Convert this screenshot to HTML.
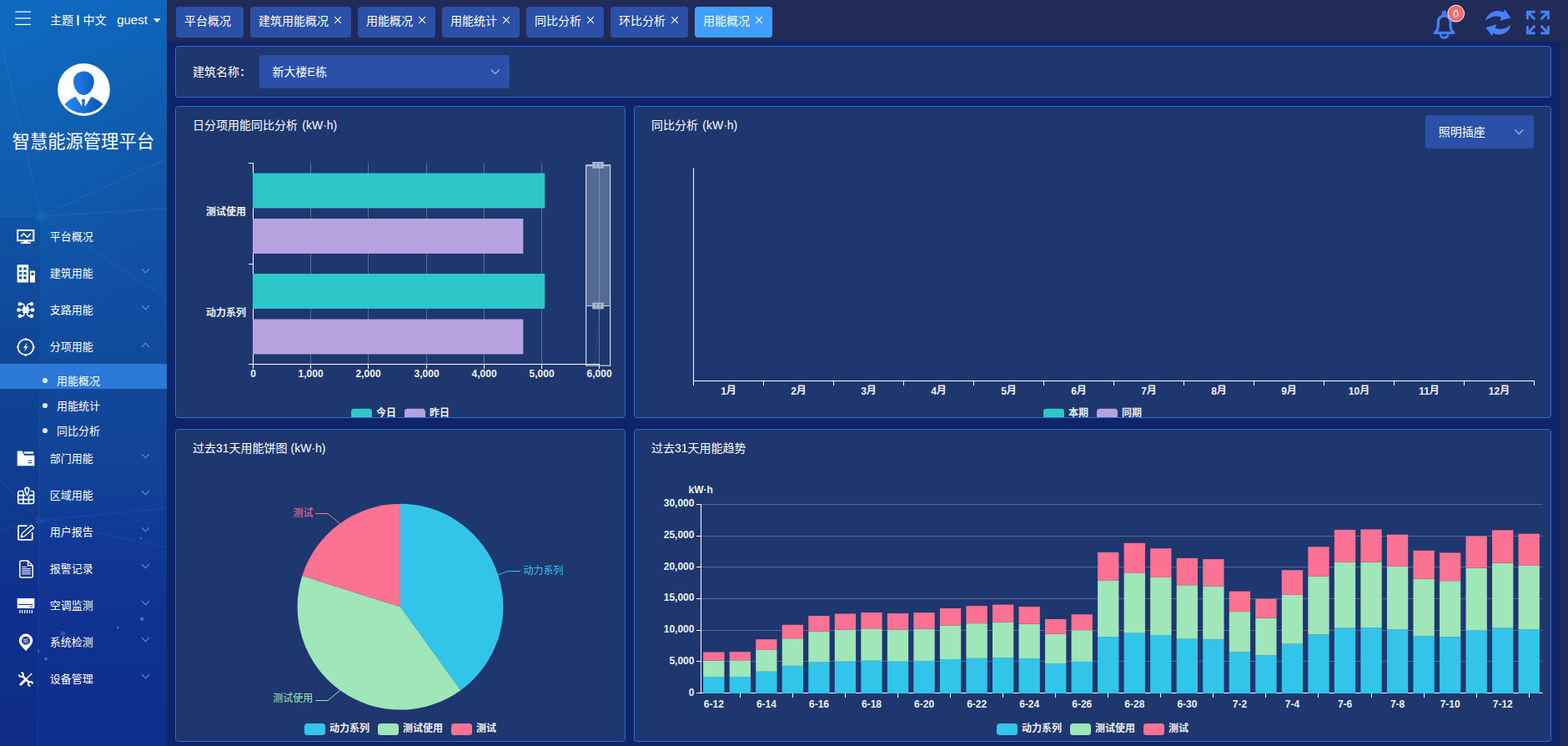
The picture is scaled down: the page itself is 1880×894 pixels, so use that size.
<!DOCTYPE html>
<html lang="zh-CN"><head><meta charset="utf-8"><title>智慧能源管理平台</title><style>
html,body{margin:0;padding:0}
body{width:1880px;height:894px;overflow:hidden;position:relative;background:#0f2569;font-family:"Liberation Sans","Noto Sans CJK SC",sans-serif;color:#fff}
.abs{position:absolute}
.t{position:absolute;white-space:nowrap;line-height:1;height:1em;color:var(--c)}
.cj{display:inline-block;position:relative;height:1em;line-height:1;vertical-align:top;white-space:nowrap;font-family:"Liberation Sans","Noto Sans CJK SC",sans-serif}
.la{display:inline-block;vertical-align:top;position:relative;top:.034em;white-space:pre}
.ttl .cj:first-child+.la:last-child{margin-left:1.400px}
#side{position:absolute;left:0;top:0;width:200px;height:894px;overflow:hidden;background:linear-gradient(180deg,#0e66bb 0%,#1057aa 22%,#114b9e 45%,#104698 56%,#114296 64%,#103a95 72%,#103492 79%,#0e2f8d 95%,#0e2e8b 100%)}
#top{position:absolute;left:200px;top:0;width:1680px;height:50px;background:#212b57}
.tab{position:absolute;top:8px;height:37px;border-radius:4px;background:#2a50a8}
.tab.on{background:#409eff}
.panel{position:absolute;box-sizing:border-box;background:#1e376f;border:1px solid #2d6bd0;border-radius:4px;overflow:hidden}
.sel{position:absolute;background:#2a50a8;border-radius:4px}
</style></head><body><div id="side"><svg class="abs" style="left:0;top:0" width="200" height="894" viewBox="0 0 200 894">
<defs>
<radialGradient id="glow" cx="0.1" cy="0.02" r="0.9"><stop offset="0" stop-color="#0d72c4" stop-opacity=".38"/><stop offset="1" stop-color="#0d72c4" stop-opacity="0"/></radialGradient>
<linearGradient id="av" gradientUnits="userSpaceOnUse" x1="82" y1="0" x2="118" y2="0"><stop offset="0" stop-color="#2286f0"/><stop offset="1" stop-color="#0d57bb"/></linearGradient>
<clipPath id="avc"><circle cx="100.2" cy="107.4" r="28.3"/></clipPath>
</defs>
<rect width="200" height="500" fill="url(#glow)"/>
<path d="M0 259L49 259L45 894H0Z" fill="#06205f" fill-opacity=".10"/>
<g stroke="#3f8ee0" stroke-opacity=".22" stroke-width="1.400" fill="none">
<path d="M49 259L-1 40"/><path d="M49 259L200 190"/><path d="M49 259L200 250"/><path d="M49 259L0 259"/><path d="M49 259L200 357"/><path d="M49 259L45 894" stroke-opacity=".13"/>
</g>
<g stroke="#3f78e0" stroke-opacity=".16" stroke-width="1.400" fill="none">
<path d="M46.800 623.700L0 575"/><path d="M46.800 623.700L200 609"/><path d="M46.800 623.700L200 656"/><path d="M46.800 623.700L0 636"/>
</g>
<circle cx="49" cy="259.500" r="6.500" fill="#1a66bb" fill-opacity=".75"/>
<circle cx="46.800" cy="623.700" r="5.500" fill="#2a5fc8" fill-opacity=".22"/>
<g fill="#6f9ae6" fill-opacity=".55"><circle cx="170.300" cy="741.800" r="2.300"/><circle cx="141.300" cy="752" r="1.600"/><circle cx="75.400" cy="759.300" r="3" fill-opacity=".3"/><circle cx="55" cy="789.500" r="1.800"/><circle cx="46" cy="780.500" r="1.200"/><circle cx="169" cy="645" r="1.200"/></g>
<g stroke="#fff" stroke-width="1.3"><path d="M18.3 14.2H37M18.3 21.8H37M18.3 29.4H37"/></g><rect x="92.5" y="18.2" width="2" height="12.3" fill="#fff"/><path d="M183.8 22.3h8.8l-4.4 4.8z" fill="#fff"/><circle cx="100.500" cy="107.500" r="31.400" fill="#fff"/><g fill="url(#av)">
<path d="M100.400 85.500C107.500 85.500 112.800 90.500 112.800 97.500C112.800 105.500 107 114 100.400 114C93.800 114 87.900 105.500 87.900 97.500C87.900 90.500 93.300 85.500 100.400 85.500Z"/>
<path d="M90.600 115.700L98 126.900H102.600L109.500 115.900Q118.500 119.500 123.300 124.900A29.200 29.200 0 0 1 77.600 124.900Q82 119.500 90.600 115.700Z"/>
<circle cx="99.900" cy="120.700" r="2.100"/><rect x="98.400" y="121.500" width="3.100" height="6"/>
</g><rect x="0" y="436" width="200" height="30" fill="#2b79d8"/><circle cx="54" cy="456" r="3.1" fill="#e2e4ea"/><circle cx="54" cy="486" r="3.1" fill="#e2e4ea"/><circle cx="54" cy="516" r="3.1" fill="#e2e4ea"/><g stroke="#93a8d8" stroke-width="1.1" fill="none" stroke-opacity=".78"><path d="M170 322.2l4.5 4.6l4.5-4.6"/><path d="M170 366.2l4.5 4.6l4.5-4.6"/><path d="M170 544.2l4.5 4.6l4.5-4.6"/><path d="M170 588.2l4.5 4.6l4.5-4.6"/><path d="M170 632.2l4.5 4.6l4.5-4.6"/><path d="M170 676.2l4.5 4.6l4.5-4.6"/><path d="M170 720.2l4.5 4.6l4.5-4.6"/><path d="M170 764.2l4.5 4.6l4.5-4.6"/><path d="M170 808.2l4.5 4.6l4.5-4.6"/><path d="M170 415.8l4.5-4.6l4.5 4.6"/></g><g fill="#fff"><path d="M20.1 275h21.2v14.2H20.1zM22.1 277v10.2h17.2V277z" fill-rule="evenodd"/><rect x="28.4" y="289" width="5.2" height="1.6"/><rect x="24.8" y="290.3" width="12.2" height="1.7"/><path d="M24.9 283.6l3.5-3.7l4.4 4.3l4-4.2" stroke="#fff" stroke-width="1.5" fill="none"/><path d="M20.6 317.2h13.6v21.4H20.6zM23 320.5h3.1v3.1h-3.1zM23 325.9h3.1v3.1h-3.1zM23 331.3h3.1v3.1h-3.1zM28.4 320.5h3.1v3.1h-3.1zM28.4 325.9h3.1v3.1h-3.1zM28.4 331.3h3.1v3.1h-3.1zM36 324.5h6v14.1h-6zM37.4 326.8h3.1v3.1h-3.1z" fill-rule="evenodd"/><rect x="27.200" y="367.800" width="7.300" height="7.300" rx=".8"/><circle cx="23.9" cy="364.2" r="2.3"/><circle cx="37.8" cy="364.2" r="2.3"/><circle cx="22.5" cy="371.4" r="2.3"/><circle cx="39.1" cy="371.4" r="2.3"/><circle cx="23.9" cy="378.7" r="2.3"/><circle cx="37.8" cy="378.7" r="2.3"/><path d="M23.9 364.2h3.6l1.6 1.8v2.5M37.8 364.2h-3.6l-1.6 1.8v2.5M22.5 371.4h17M23.9 378.7h3.6l1.6-1.8v-2.5M37.8 378.7h-3.6l-1.6-1.8v-2.5" stroke="#fff" stroke-width="1.500" fill="none"/><circle cx="30.8" cy="416" r="9.3" stroke="#fff" stroke-width="1.8" fill="none"/><path d="M30.8 405.2v2M30.8 424.8v2M20 416h2M39.6 416h2" stroke="#fff" stroke-width="2.2"/><path d="M32.6 410.6l-4.6 6.3h2.6l-1.6 4.6l4.8-6.4h-2.6z"/><path d="M20.7 540.6h6l2.6 5.1h12v12.5H20.7zM33.6 551.4h5v1.1h-5zM33.6 554h5v1.1h-5z" fill-rule="evenodd"/><path d="M28.4 541.2h11.8v2.6h-10.5z"/><g stroke="#fff" stroke-width="1.6" fill="none"><rect x="21.7" y="588.5" width="18.8" height="15" rx="2.2"/><path d="M27.9 588.5v15M34.4 588.5v15M21.7 593.6h18.8M21.7 598.6h18.8"/></g><path d="M32.400 593.300c-1.200-2.200-2.400-4.300-2.400-6.700a2.400 2.400 0 0 1 4.800 0c0 2.400-1.200 4.500-2.400 6.700z" fill="#1046a0" stroke="#1046a0" stroke-width="4.400"/><path d="M32.400 593.300c-1.200-2.200-2.400-4.300-2.400-6.700a2.400 2.400 0 0 1 4.800 0c0 2.400-1.200 4.500-2.400 6.700z" fill="#1046a0" stroke="#fff" stroke-width="1.600" stroke-linejoin="round"/><g stroke="#fff" stroke-width="1.7" fill="none"><path d="M32.5 630.2H22.9a.9.9 0 0 0-.9.9v14.9a.9.9 0 0 0 .9.9h14.9a.9.9 0 0 0 .9-.9V638"/><path d="M25 643.9l1.4-4.6l11.3-10l3 3.3l-11.2 10z" stroke-width="1.3" stroke-linejoin="round"/></g><path d="M25 643.9l.9-3l2.2 2.4z"/><g stroke="#fff" fill="none"><path d="M33.5 672H25.2a1.4 1.4 0 0 0-1.4 1.4v17.3a1.4 1.4 0 0 0 1.4 1.4h12.6a1.4 1.4 0 0 0 1.4-1.4V678zv5.8h5.7" stroke-width="1.5" stroke-linejoin="round"/><path d="M26.2 679.4h6M26.2 681.6h10.6M26.2 683.7h10.6M26.2 685.8h10.6M26.2 687.9h10.6" stroke-width="1"/></g><path d="M20.7 717h20.6v12.1H20.7zM22 723.9h17.4v1H22zM35.6 726.4h3.6v1h-3.6z" fill-rule="evenodd"/><rect x="23.2" y="730.9" width="1.3" height="4"/><rect x="26.1" y="730.9" width="1.3" height="4"/><rect x="29" y="730.9" width="1.3" height="4"/><rect x="31.9" y="730.9" width="1.3" height="4"/><rect x="34.8" y="730.9" width="1.3" height="4"/><rect x="37.7" y="730.9" width="1.3" height="4"/><path d="M31 780.2c-2.600-3.600-8.200-7.400-8.200-12.400a8.200 8.200 0 0 1 16.400 0c0 5-5.600 8.800-8.200 12.400zM31 762.800a5 5 0 1 0 0 10a5 5 0 0 0 0-10z" fill-rule="evenodd"/><path d="M27.600 766.300h4.800c1.300 0 1.300-1.700 0-1.700M27.600 768h6.500M28.500 769.700h3.300c1.500 0 1.500 1.900 0 1.900" stroke="#fff" stroke-width=".8" fill="none"/><g stroke="#fff" fill="none"><path d="M27 810.100l7.800 7.800" stroke-width="2.600"/><path d="M25.43 805.90A2.5 2.5 0 1 1 22.80 808.53M36.370 822.10A2.5 2.5 0 1 1 39.00 819.47" stroke-width="2"/><path d="M37.900 807.200l-7.200 7.200" stroke-width="1.400" stroke-linecap="round"/><path d="M30.300 814.800l-5.400 5.400" stroke-width="3.100" stroke-linecap="round"/></g></g></svg><div class="t" style="top:17.20px;font-size:14px;--c:#fff;left:59.90px;"><span class="cj" style="width:2em">主题</span></div><div class="t" style="top:17.20px;font-size:14px;--c:#fff;left:99.50px;"><span class="cj" style="width:2em">中文</span></div><div class="t" style="top:15.30px;font-size:15px;--c:#fff;left:140.20px;"><span class="la">guest</span></div><div class="t" style="top:159.65px;font-size:21.3px;--c:#fff;left:99.80px;transform:translateX(-50%);"><span class="cj" style="width:8em">智慧能源管理平台</span></div><div class="t" style="top:277.30px;font-size:13px;--c:#fff;left:59.80px;"><span class="cj" style="width:4em">平台概况</span></div><div class="t" style="top:321.30px;font-size:13px;--c:#fff;left:59.80px;"><span class="cj" style="width:4em">建筑用能</span></div><div class="t" style="top:365.30px;font-size:13px;--c:#fff;left:59.80px;"><span class="cj" style="width:4em">支路用能</span></div><div class="t" style="top:409.30px;font-size:13px;--c:#fff;left:59.80px;"><span class="cj" style="width:4em">分项用能</span></div><div class="t" style="top:543.30px;font-size:13px;--c:#fff;left:59.80px;"><span class="cj" style="width:4em">部门用能</span></div><div class="t" style="top:587.30px;font-size:13px;--c:#fff;left:59.80px;"><span class="cj" style="width:4em">区域用能</span></div><div class="t" style="top:631.30px;font-size:13px;--c:#fff;left:59.80px;"><span class="cj" style="width:4em">用户报告</span></div><div class="t" style="top:675.30px;font-size:13px;--c:#fff;left:59.80px;"><span class="cj" style="width:4em">报警记录</span></div><div class="t" style="top:719.30px;font-size:13px;--c:#fff;left:59.80px;"><span class="cj" style="width:4em">空调监测</span></div><div class="t" style="top:763.30px;font-size:13px;--c:#fff;left:59.80px;"><span class="cj" style="width:4em">系统检测</span></div><div class="t" style="top:807.30px;font-size:13px;--c:#fff;left:59.80px;"><span class="cj" style="width:4em">设备管理</span></div><div class="t" style="top:449.50px;font-size:13px;--c:#fff;left:68.00px;"><span class="cj" style="width:4em">用能概况</span></div><div class="t" style="top:479.50px;font-size:13px;--c:#fff;left:68.00px;"><span class="cj" style="width:4em">用能统计</span></div><div class="t" style="top:509.50px;font-size:13px;--c:#fff;left:68.00px;"><span class="cj" style="width:4em">同比分析</span></div></div><div id="top"></div><div class="tab" style="left:211px;width:81px"></div><div class="t" style="top:18.40px;font-size:14px;--c:#fff;left:221.00px;"><span class="cj" style="width:4em">平台概况</span></div><div class="tab" style="left:300px;width:121px"></div><div class="t" style="top:18.40px;font-size:14px;--c:#fff;left:310.00px;"><span class="cj" style="width:6em">建筑用能概况</span></div><svg class="abs" style="left:399.8px;top:19.1px" width="10" height="10" viewBox="0 0 10 10"><path d="M1.200 1.200l7.600 7.600M8.800 1.200l-7.600 7.600" stroke="#fff" stroke-width="1.100" fill="none"/></svg><div class="tab" style="left:429px;width:93px"></div><div class="t" style="top:18.40px;font-size:14px;--c:#fff;left:439.00px;"><span class="cj" style="width:4em">用能概况</span></div><svg class="abs" style="left:500.8px;top:19.1px" width="10" height="10" viewBox="0 0 10 10"><path d="M1.200 1.200l7.600 7.600M8.800 1.200l-7.600 7.600" stroke="#fff" stroke-width="1.100" fill="none"/></svg><div class="tab" style="left:530px;width:93px"></div><div class="t" style="top:18.40px;font-size:14px;--c:#fff;left:540.00px;"><span class="cj" style="width:4em">用能统计</span></div><svg class="abs" style="left:601.8px;top:19.1px" width="10" height="10" viewBox="0 0 10 10"><path d="M1.200 1.200l7.600 7.600M8.800 1.200l-7.600 7.600" stroke="#fff" stroke-width="1.100" fill="none"/></svg><div class="tab" style="left:631px;width:93px"></div><div class="t" style="top:18.40px;font-size:14px;--c:#fff;left:641.00px;"><span class="cj" style="width:4em">同比分析</span></div><svg class="abs" style="left:702.8px;top:19.1px" width="10" height="10" viewBox="0 0 10 10"><path d="M1.200 1.200l7.600 7.600M8.800 1.200l-7.600 7.600" stroke="#fff" stroke-width="1.100" fill="none"/></svg><div class="tab" style="left:732px;width:93px"></div><div class="t" style="top:18.40px;font-size:14px;--c:#fff;left:742.00px;"><span class="cj" style="width:4em">环比分析</span></div><svg class="abs" style="left:803.8px;top:19.1px" width="10" height="10" viewBox="0 0 10 10"><path d="M1.200 1.200l7.600 7.600M8.800 1.200l-7.600 7.600" stroke="#fff" stroke-width="1.100" fill="none"/></svg><div class="tab on" style="left:833px;width:93px"></div><div class="t" style="top:18.40px;font-size:14px;--c:#fff;left:843.00px;"><span class="cj" style="width:4em">用能概况</span></div><svg class="abs" style="left:904.8px;top:19.1px" width="10" height="10" viewBox="0 0 10 10"><path d="M1.200 1.200l7.600 7.600M8.800 1.200l-7.600 7.600" stroke="#fff" stroke-width="1.100" fill="none"/></svg><svg class="abs" style="left:1700px;top:0" width="180" height="50" viewBox="1700 0 180 50">
<g fill="none" stroke="#4481fb" stroke-width="3.300" stroke-linejoin="round" stroke-linecap="round">
<path d="M1720.200 39.300h22.800c-3.500-2.600-4-6-4-10v-3.300a7.300 7.300 0 0 0-14.600 0v3.300c0 4-.5 7.400-4.200 10z"/>
<circle cx="1731.600" cy="15.600" r="1.600" stroke-width="2.400"/>
<path d="M1727.200 42.200a4.700 4.700 0 0 0 8.800 0" stroke-width="2.800"/>
</g>
<circle cx="1745.700" cy="16.200" r="9.900" fill="#f56c6c" stroke="#fff" stroke-width="1"/>
<g fill="#4481fb">
<path id="rf" d="M1781.200 24.800C1782.500 16 1793 9.800 1802.600 14.500L1804 11.200L1811.400 21.200L1798.300 25L1800 20.800C1794 18 1786.500 19.800 1781.200 24.800Z"/>
<use href="#rf" transform="rotate(180 1796.400 27.100)"/>
</g>
<g stroke="#4481fb" stroke-width="2.900" fill="none">
<path d="M1831.400 23.200v-8.900h9.200M1832 14.900l8.300 8.300" />
<path d="M1856.400 23.200v-8.900h-9.200M1855.800 14.900l-8.300 8.300"/>
<path d="M1831.400 30.900v8.900h9.200M1832 39.200l8.300-8.300"/>
<path d="M1856.400 30.900v8.900h-9.200M1855.800 39.200l-8.300-8.300"/>
</g>
</svg><div class="t" style="top:10.50px;font-size:12px;--c:#fff;left:1745.70px;transform:translateX(-50%);"><span class="la">0</span></div><div class="abs" style="left:1870px;top:50px;width:10px;height:844px;background:#212b57;border-radius:5px 5px 0 0"></div><div class="panel" style="left:210px;top:55px;width:1650px;height:62px"><div class="abs" style="left:-211px;top:-56px;width:1880px;height:894px"><div class="sel" style="left:310.500px;top:66px;width:300px;height:39.500px"></div><svg class="abs" style="left:0;top:0" width="1880" height="894" viewBox="0 0 1880 894"><path d="M588.8 83.4l5 5l5-5" stroke="#b8bfd2" stroke-width="1.200" fill="none"/></svg><div class="t" style="top:79.00px;font-size:14px;--c:#fff;left:231.00px;"><span class="cj" style="width:4em">建筑名称</span><span class="la" style="font-weight:bold;margin-left:1.200px">:</span></div><div class="t" style="top:79.00px;font-size:14px;--c:#fff;left:326.60px;"><span class="cj" style="width:3em">新大楼</span><span class="la">E</span><span class="cj" style="width:1em">栋</span></div></div></div><div class="panel" style="left:210px;top:127px;width:540px;height:374px"><div class="abs" style="left:-211px;top:-128px;width:1880px;height:894px"><svg class="abs" style="left:0;top:0" width="1880" height="894" viewBox="0 0 1880 894"><g stroke="#fff" stroke-opacity=".28" stroke-width="1"><path d="M372.5 195.5V436.5"/><path d="M441.5 195.5V436.5"/><path d="M511.5 195.5V436.5"/><path d="M580.5 195.5V436.5"/><path d="M649.5 195.5V436.5"/><path d="M718.5 195.5V436.5"/></g><g stroke="#fff" stroke-width="1" fill="none"><path d="M303.5 195V437"/><path d="M298 195.5H303.5"/><path d="M298 316.5H303.5"/><path d="M298 436.5H303.5"/><path d="M303 436.5H719"/><path d="M303.5 436.5V442"/><path d="M372.5 436.5V442"/><path d="M441.5 436.5V442"/><path d="M511.5 436.5V442"/><path d="M580.5 436.5V442"/><path d="M649.5 436.5V442"/><path d="M718.5 436.5V442"/></g><rect x="303" y="207.55" width="350.2" height="41.9" fill="#2ec7c9"/><rect x="303" y="262.02" width="324.3" height="41.9" fill="#b6a2de"/><rect x="303" y="328.05" width="350.2" height="41.9" fill="#2ec7c9"/><rect x="303" y="382.52" width="324.3" height="41.9" fill="#b6a2de"/><rect x="702.600" y="197.600" width="29" height="169" fill="#a7b7cc" fill-opacity=".4"/><path d="M713 438L719 366.500" stroke="#fff" stroke-opacity=".06" stroke-width="1.500"/><rect x="702.600" y="197.600" width="29" height="240.500" fill="none" stroke="#d3d7df" stroke-width="1.200"/><path d="M702.600 366.500h29" stroke="#c9d0dc" stroke-width="1"/><path d="M702 198.100h30" stroke="#aab9d0" stroke-width="2.100"/><rect x="710.200" y="194" width="13.700" height="7.800" fill="#a7b7cc"/><circle cx="714.7" cy="196.6" r=".700" fill="#1e376f"/><circle cx="714.7" cy="199.5" r=".650" fill="#61769e"/><circle cx="719.5" cy="196.6" r=".700" fill="#1e376f"/><circle cx="719.5" cy="199.5" r=".650" fill="#61769e"/><rect x="710.200" y="362.6" width="13.700" height="7.800" fill="#a7b7cc"/><circle cx="714.7" cy="365.2" r=".700" fill="#1e376f"/><circle cx="714.7" cy="368.1" r=".650" fill="#61769e"/><circle cx="719.5" cy="365.2" r=".700" fill="#1e376f"/><circle cx="719.5" cy="368.1" r=".650" fill="#61769e"/><rect x="421" y="489.8" width="25" height="14" rx="3.500" fill="#2ec7c9"/><rect x="485" y="489.8" width="25" height="14" rx="3.500" fill="#b6a2de"/></svg><div class="t ttl" style="top:143.00px;font-size:14px;--c:#fff;left:231.00px;"><span class="cj" style="width:9em">日分项用能同比分析</span><span class="la"> (kW·h)</span></div><div class="t" style="top:248.20px;font-size:12px;--c:#eef0f6;right:1585.00px;font-weight:bold;"><span class="cj" style="width:4em">测试使用</span></div><div class="t" style="top:368.60px;font-size:12px;--c:#eef0f6;right:1585.00px;font-weight:bold;"><span class="cj" style="width:4em">动力系列</span></div><div class="t" style="top:441.60px;font-size:12px;--c:#eef0f6;left:303.60px;transform:translateX(-50%);font-weight:bold;"><span class="la">0</span></div><div class="t" style="top:441.60px;font-size:12px;--c:#eef0f6;left:372.60px;transform:translateX(-50%);font-weight:bold;"><span class="la">1,000</span></div><div class="t" style="top:441.60px;font-size:12px;--c:#eef0f6;left:441.60px;transform:translateX(-50%);font-weight:bold;"><span class="la">2,000</span></div><div class="t" style="top:441.60px;font-size:12px;--c:#eef0f6;left:511.60px;transform:translateX(-50%);font-weight:bold;"><span class="la">3,000</span></div><div class="t" style="top:441.60px;font-size:12px;--c:#eef0f6;left:580.60px;transform:translateX(-50%);font-weight:bold;"><span class="la">4,000</span></div><div class="t" style="top:441.60px;font-size:12px;--c:#eef0f6;left:649.60px;transform:translateX(-50%);font-weight:bold;"><span class="la">5,000</span></div><div class="t" style="top:441.60px;font-size:12px;--c:#eef0f6;left:718.60px;transform:translateX(-50%);font-weight:bold;"><span class="la">6,000</span></div><div class="t" style="top:489.40px;font-size:12px;--c:#eef0f6;left:451.00px;font-weight:bold;"><span class="cj" style="width:2em">今日</span></div><div class="t" style="top:489.40px;font-size:12px;--c:#eef0f6;left:515.00px;font-weight:bold;"><span class="cj" style="width:2em">昨日</span></div></div></div><div class="panel" style="left:760px;top:127px;width:1100px;height:374px"><div class="abs" style="left:-761px;top:-128px;width:1880px;height:894px"><div class="sel" style="left:1708.500px;top:137.500px;width:130px;height:40px"></div><svg class="abs" style="left:0;top:0" width="1880" height="894" viewBox="0 0 1880 894"><g stroke="#fff" stroke-width="1" fill="none"><path d="M831.5 201V457"/><path d="M831 456.5H1840"/><path d="M831.5 456.5V462"/><path d="M915.5 456.5V462"/><path d="M999.5 456.5V462"/><path d="M1083.5 456.5V462"/><path d="M1167.5 456.5V462"/><path d="M1251.5 456.5V462"/><path d="M1335.5 456.5V462"/><path d="M1419.5 456.5V462"/><path d="M1503.5 456.5V462"/><path d="M1587.5 456.5V462"/><path d="M1671.5 456.5V462"/><path d="M1755.5 456.5V462"/><path d="M1839.5 456.5V462"/></g><rect x="1251" y="489.8" width="25" height="14" rx="3.500" fill="#2ec7c9"/><rect x="1315" y="489.8" width="25" height="14" rx="3.500" fill="#b6a2de"/><path d="M1816.3 155.4l5 5l5-5" stroke="#b8bfd2" stroke-width="1.200" fill="none"/></svg><div class="t ttl" style="top:143.00px;font-size:14px;--c:#fff;left:781.00px;"><span class="cj" style="width:4em">同比分析</span><span class="la"> (kW·h)</span></div><div class="t" style="top:151.00px;font-size:14px;--c:#fff;left:1724.80px;"><span class="cj" style="width:4em">照明插座</span></div><div class="t" style="top:462.40px;font-size:12px;--c:#eef0f6;left:873.50px;transform:translateX(-50%);font-weight:bold;"><span class="la">1</span><span class="cj" style="width:1em">月</span></div><div class="t" style="top:462.40px;font-size:12px;--c:#eef0f6;left:957.50px;transform:translateX(-50%);font-weight:bold;"><span class="la">2</span><span class="cj" style="width:1em">月</span></div><div class="t" style="top:462.40px;font-size:12px;--c:#eef0f6;left:1041.50px;transform:translateX(-50%);font-weight:bold;"><span class="la">3</span><span class="cj" style="width:1em">月</span></div><div class="t" style="top:462.40px;font-size:12px;--c:#eef0f6;left:1125.50px;transform:translateX(-50%);font-weight:bold;"><span class="la">4</span><span class="cj" style="width:1em">月</span></div><div class="t" style="top:462.40px;font-size:12px;--c:#eef0f6;left:1209.50px;transform:translateX(-50%);font-weight:bold;"><span class="la">5</span><span class="cj" style="width:1em">月</span></div><div class="t" style="top:462.40px;font-size:12px;--c:#eef0f6;left:1293.50px;transform:translateX(-50%);font-weight:bold;"><span class="la">6</span><span class="cj" style="width:1em">月</span></div><div class="t" style="top:462.40px;font-size:12px;--c:#eef0f6;left:1377.50px;transform:translateX(-50%);font-weight:bold;"><span class="la">7</span><span class="cj" style="width:1em">月</span></div><div class="t" style="top:462.40px;font-size:12px;--c:#eef0f6;left:1461.50px;transform:translateX(-50%);font-weight:bold;"><span class="la">8</span><span class="cj" style="width:1em">月</span></div><div class="t" style="top:462.40px;font-size:12px;--c:#eef0f6;left:1545.50px;transform:translateX(-50%);font-weight:bold;"><span class="la">9</span><span class="cj" style="width:1em">月</span></div><div class="t" style="top:462.40px;font-size:12px;--c:#eef0f6;left:1629.50px;transform:translateX(-50%);font-weight:bold;"><span class="la">10</span><span class="cj" style="width:1em">月</span></div><div class="t" style="top:462.40px;font-size:12px;--c:#eef0f6;left:1713.50px;transform:translateX(-50%);font-weight:bold;"><span class="la">11</span><span class="cj" style="width:1em">月</span></div><div class="t" style="top:462.40px;font-size:12px;--c:#eef0f6;left:1797.50px;transform:translateX(-50%);font-weight:bold;"><span class="la">12</span><span class="cj" style="width:1em">月</span></div><div class="t" style="top:489.40px;font-size:12px;--c:#eef0f6;left:1281.00px;font-weight:bold;"><span class="cj" style="width:2em">本期</span></div><div class="t" style="top:489.40px;font-size:12px;--c:#eef0f6;left:1345.00px;font-weight:bold;"><span class="cj" style="width:2em">同期</span></div></div></div><div class="panel" style="left:210px;top:514px;width:540px;height:375px"><div class="abs" style="left:-211px;top:-515px;width:1880px;height:894px"><svg class="abs" style="left:0;top:0" width="1880" height="894" viewBox="0 0 1880 894"><path d="M480 727.2L480.00 603.80A123.4 123.4 0 0 1 552.36 827.16Z" fill="#32c5e9"/><path d="M480 727.2L552.36 827.16A123.4 123.4 0 0 1 362.31 690.09Z" fill="#9fe6b8"/><path d="M480 727.2L362.31 690.09A123.4 123.4 0 0 1 480.00 603.80Z" fill="#fb7293"/><g fill="none" stroke-width="1"><path d="M597.200 689.100L608.800 684.500H624" stroke="#32c5e9"/><path d="M407.500 827.500L393.100 839.500H378.300" stroke="#9fe6b8"/><path d="M407.600 627.500L393 615.500H378.400" stroke="#fb7293"/></g><rect x="365" y="867" width="25" height="14" rx="3.500" fill="#32c5e9"/><rect x="453" y="867" width="25" height="14" rx="3.500" fill="#9fe6b8"/><rect x="541" y="867" width="25" height="14" rx="3.500" fill="#fb7293"/></svg><div class="t ttl" style="top:530.00px;font-size:14px;--c:#fff;left:231.00px;"><span class="cj" style="width:2em">过去</span><span class="la">31</span><span class="cj" style="width:5em">天用能饼图</span><span class="la"> (kW·h)</span></div><div class="t" style="top:677.80px;font-size:12px;--c:#32c5e9;left:627.50px;"><span class="cj" style="width:4em">动力系列</span></div><div class="t" style="top:831.40px;font-size:12px;--c:#9fe6b8;right:1504.70px;"><span class="cj" style="width:4em">测试使用</span></div><div class="t" style="top:608.80px;font-size:12px;--c:#fb7293;right:1504.50px;"><span class="cj" style="width:2em">测试</span></div><div class="t" style="top:866.60px;font-size:12px;--c:#eef0f6;left:395.00px;font-weight:bold;"><span class="cj" style="width:4em">动力系列</span></div><div class="t" style="top:866.60px;font-size:12px;--c:#eef0f6;left:483.00px;font-weight:bold;"><span class="cj" style="width:4em">测试使用</span></div><div class="t" style="top:866.60px;font-size:12px;--c:#eef0f6;left:571.00px;font-weight:bold;"><span class="cj" style="width:2em">测试</span></div></div></div><div class="panel" style="left:760px;top:514px;width:1100px;height:375px"><div class="abs" style="left:-761px;top:-515px;width:1880px;height:894px"><svg class="abs" style="left:0;top:0" width="1880" height="894" viewBox="0 0 1880 894"><g stroke="#fff" stroke-opacity=".25" stroke-width="1"><path d="M840.5 792.5H1849.5"/><path d="M840.5 755.5H1849.5"/><path d="M840.5 717.5H1849.5"/><path d="M840.5 679.5H1849.5"/><path d="M840.5 642.5H1849.5"/><path d="M840.5 604.5H1849.5"/></g><g stroke="#fff" stroke-width="1" fill="none"><path d="M840.5 604V831"/><path d="M840 830.5H1849.5"/><path d="M835 830.5H840.5"/><path d="M835 792.5H840.5"/><path d="M835 755.5H840.5"/><path d="M835 717.5H840.5"/><path d="M835 679.5H840.5"/><path d="M835 642.5H840.5"/><path d="M835 604.5H840.5"/><path d="M887.5 830.5V836"/><path d="M950.5 830.5V836"/><path d="M1013.5 830.5V836"/><path d="M1076.5 830.5V836"/><path d="M1139.5 830.5V836"/><path d="M1202.5 830.5V836"/><path d="M1265.5 830.5V836"/><path d="M1328.5 830.5V836"/><path d="M1391.5 830.5V836"/><path d="M1454.5 830.5V836"/><path d="M1517.5 830.5V836"/><path d="M1580.5 830.5V836"/><path d="M1644.5 830.5V836"/><path d="M1707.5 830.5V836"/><path d="M1770.5 830.5V836"/><path d="M1833.5 830.5V836"/></g><rect x="843.15" y="810.98" width="25.3" height="20.02" fill="#32c5e9"/><rect x="843.15" y="791.65" width="25.3" height="19.33" fill="#9fe6b8"/><rect x="843.15" y="781.53" width="25.3" height="10.12" fill="#fb7293"/><rect x="874.68" y="810.98" width="25.3" height="20.02" fill="#32c5e9"/><rect x="874.68" y="791.35" width="25.3" height="19.63" fill="#9fe6b8"/><rect x="874.68" y="781.23" width="25.3" height="10.12" fill="#fb7293"/><rect x="906.21" y="804.79" width="25.3" height="26.21" fill="#32c5e9"/><rect x="906.21" y="778.97" width="25.3" height="25.82" fill="#9fe6b8"/><rect x="906.21" y="766.13" width="25.3" height="12.84" fill="#fb7293"/><rect x="937.74" y="797.84" width="25.3" height="33.16" fill="#32c5e9"/><rect x="937.74" y="765.23" width="25.3" height="32.61" fill="#9fe6b8"/><rect x="937.74" y="748.77" width="25.3" height="16.46" fill="#fb7293"/><rect x="969.27" y="793.61" width="25.3" height="37.39" fill="#32c5e9"/><rect x="969.27" y="756.77" width="25.3" height="36.84" fill="#9fe6b8"/><rect x="969.27" y="738.05" width="25.3" height="18.72" fill="#fb7293"/><rect x="1000.80" y="792.56" width="25.3" height="38.44" fill="#32c5e9"/><rect x="1000.80" y="754.66" width="25.3" height="37.90" fill="#9fe6b8"/><rect x="1000.80" y="735.48" width="25.3" height="19.18" fill="#fb7293"/><rect x="1032.33" y="791.80" width="25.3" height="39.20" fill="#32c5e9"/><rect x="1032.33" y="753.30" width="25.3" height="38.50" fill="#9fe6b8"/><rect x="1032.33" y="733.97" width="25.3" height="19.33" fill="#fb7293"/><rect x="1063.86" y="792.56" width="25.3" height="38.44" fill="#32c5e9"/><rect x="1063.86" y="754.51" width="25.3" height="38.05" fill="#9fe6b8"/><rect x="1063.86" y="735.03" width="25.3" height="19.48" fill="#fb7293"/><rect x="1095.39" y="791.95" width="25.3" height="39.05" fill="#32c5e9"/><rect x="1095.39" y="753.60" width="25.3" height="38.35" fill="#9fe6b8"/><rect x="1095.39" y="734.12" width="25.3" height="19.48" fill="#fb7293"/><rect x="1126.92" y="789.99" width="25.3" height="41.01" fill="#32c5e9"/><rect x="1126.92" y="749.52" width="25.3" height="40.47" fill="#9fe6b8"/><rect x="1126.92" y="728.99" width="25.3" height="20.53" fill="#fb7293"/><rect x="1158.45" y="788.78" width="25.3" height="42.22" fill="#32c5e9"/><rect x="1158.45" y="747.11" width="25.3" height="41.67" fill="#9fe6b8"/><rect x="1158.45" y="726.12" width="25.3" height="20.99" fill="#fb7293"/><rect x="1189.98" y="788.18" width="25.3" height="42.82" fill="#32c5e9"/><rect x="1189.98" y="745.75" width="25.3" height="42.43" fill="#9fe6b8"/><rect x="1189.98" y="724.61" width="25.3" height="21.14" fill="#fb7293"/><rect x="1221.51" y="789.08" width="25.3" height="41.92" fill="#32c5e9"/><rect x="1221.51" y="747.71" width="25.3" height="41.37" fill="#9fe6b8"/><rect x="1221.51" y="727.03" width="25.3" height="20.68" fill="#fb7293"/><rect x="1253.04" y="795.12" width="25.3" height="35.88" fill="#32c5e9"/><rect x="1253.04" y="759.79" width="25.3" height="35.33" fill="#9fe6b8"/><rect x="1253.04" y="741.97" width="25.3" height="17.82" fill="#fb7293"/><rect x="1284.57" y="792.86" width="25.3" height="38.14" fill="#32c5e9"/><rect x="1284.57" y="755.26" width="25.3" height="37.60" fill="#9fe6b8"/><rect x="1284.57" y="736.24" width="25.3" height="19.02" fill="#fb7293"/><rect x="1316.10" y="763.10" width="25.3" height="67.90" fill="#32c5e9"/><rect x="1316.10" y="695.70" width="25.3" height="67.40" fill="#9fe6b8"/><rect x="1316.10" y="661.90" width="25.3" height="33.80" fill="#fb7293"/><rect x="1347.63" y="758.70" width="25.3" height="72.30" fill="#32c5e9"/><rect x="1347.63" y="687.00" width="25.3" height="71.70" fill="#9fe6b8"/><rect x="1347.63" y="650.80" width="25.3" height="36.20" fill="#fb7293"/><rect x="1379.16" y="761.00" width="25.3" height="70.00" fill="#32c5e9"/><rect x="1379.16" y="691.90" width="25.3" height="69.10" fill="#9fe6b8"/><rect x="1379.16" y="657.20" width="25.3" height="34.70" fill="#fb7293"/><rect x="1410.69" y="765.70" width="25.3" height="65.30" fill="#32c5e9"/><rect x="1410.69" y="701.30" width="25.3" height="64.40" fill="#9fe6b8"/><rect x="1410.69" y="668.90" width="25.3" height="32.40" fill="#fb7293"/><rect x="1442.22" y="766.20" width="25.3" height="64.80" fill="#32c5e9"/><rect x="1442.22" y="702.50" width="25.3" height="63.70" fill="#9fe6b8"/><rect x="1442.22" y="670.10" width="25.3" height="32.40" fill="#fb7293"/><rect x="1473.75" y="781.40" width="25.3" height="49.60" fill="#32c5e9"/><rect x="1473.75" y="733.10" width="25.3" height="48.30" fill="#9fe6b8"/><rect x="1473.75" y="708.60" width="25.3" height="24.50" fill="#fb7293"/><rect x="1505.28" y="785.40" width="25.3" height="45.60" fill="#32c5e9"/><rect x="1505.28" y="740.60" width="25.3" height="44.80" fill="#9fe6b8"/><rect x="1505.28" y="717.80" width="25.3" height="22.80" fill="#fb7293"/><rect x="1536.81" y="771.60" width="25.3" height="59.40" fill="#32c5e9"/><rect x="1536.81" y="712.90" width="25.3" height="58.70" fill="#9fe6b8"/><rect x="1536.81" y="683.30" width="25.3" height="29.60" fill="#fb7293"/><rect x="1568.34" y="760.30" width="25.3" height="70.70" fill="#32c5e9"/><rect x="1568.34" y="690.50" width="25.3" height="69.80" fill="#9fe6b8"/><rect x="1568.34" y="655.30" width="25.3" height="35.20" fill="#fb7293"/><rect x="1599.87" y="752.60" width="25.3" height="78.40" fill="#32c5e9"/><rect x="1599.87" y="673.90" width="25.3" height="78.70" fill="#9fe6b8"/><rect x="1599.87" y="634.90" width="25.3" height="39.00" fill="#fb7293"/><rect x="1631.40" y="752.30" width="25.3" height="78.70" fill="#32c5e9"/><rect x="1631.40" y="673.60" width="25.3" height="78.70" fill="#9fe6b8"/><rect x="1631.40" y="634.40" width="25.3" height="39.20" fill="#fb7293"/><rect x="1662.93" y="754.40" width="25.3" height="76.60" fill="#32c5e9"/><rect x="1662.93" y="678.80" width="25.3" height="75.60" fill="#9fe6b8"/><rect x="1662.93" y="640.70" width="25.3" height="38.10" fill="#fb7293"/><rect x="1694.46" y="762.40" width="25.3" height="68.60" fill="#32c5e9"/><rect x="1694.46" y="693.80" width="25.3" height="68.60" fill="#9fe6b8"/><rect x="1694.46" y="659.80" width="25.3" height="34.00" fill="#fb7293"/><rect x="1725.99" y="763.40" width="25.3" height="67.60" fill="#32c5e9"/><rect x="1725.99" y="696.20" width="25.3" height="67.20" fill="#9fe6b8"/><rect x="1725.99" y="662.40" width="25.3" height="33.80" fill="#fb7293"/><rect x="1757.52" y="755.40" width="25.3" height="75.60" fill="#32c5e9"/><rect x="1757.52" y="680.70" width="25.3" height="74.70" fill="#9fe6b8"/><rect x="1757.52" y="642.60" width="25.3" height="38.10" fill="#fb7293"/><rect x="1789.05" y="752.60" width="25.3" height="78.40" fill="#32c5e9"/><rect x="1789.05" y="674.60" width="25.3" height="78.00" fill="#9fe6b8"/><rect x="1789.05" y="635.30" width="25.3" height="39.30" fill="#fb7293"/><rect x="1820.58" y="754.20" width="25.3" height="76.80" fill="#32c5e9"/><rect x="1820.58" y="677.90" width="25.3" height="76.30" fill="#9fe6b8"/><rect x="1820.58" y="639.60" width="25.3" height="38.30" fill="#fb7293"/><rect x="1195" y="867" width="25" height="14" rx="3.500" fill="#32c5e9"/><rect x="1283" y="867" width="25" height="14" rx="3.500" fill="#9fe6b8"/><rect x="1371" y="867" width="25" height="14" rx="3.500" fill="#fb7293"/></svg><div class="t" style="top:530.00px;font-size:14px;--c:#fff;left:781.00px;"><span class="cj" style="width:2em">过去</span><span class="la">31</span><span class="cj" style="width:5em">天用能趋势</span></div><div class="t" style="top:580.20px;font-size:12px;--c:#eef0f6;left:840.20px;transform:translateX(-50%);font-weight:bold;"><span class="la">kW·h</span></div><div class="t" style="top:823.50px;font-size:12px;--c:#eef0f6;right:1047.60px;font-weight:bold;"><span class="la">0</span></div><div class="t" style="top:785.65px;font-size:12px;--c:#eef0f6;right:1047.60px;font-weight:bold;"><span class="la">5,000</span></div><div class="t" style="top:747.80px;font-size:12px;--c:#eef0f6;right:1047.60px;font-weight:bold;"><span class="la">10,000</span></div><div class="t" style="top:709.95px;font-size:12px;--c:#eef0f6;right:1047.60px;font-weight:bold;"><span class="la">15,000</span></div><div class="t" style="top:672.10px;font-size:12px;--c:#eef0f6;right:1047.60px;font-weight:bold;"><span class="la">20,000</span></div><div class="t" style="top:634.25px;font-size:12px;--c:#eef0f6;right:1047.60px;font-weight:bold;"><span class="la">25,000</span></div><div class="t" style="top:596.40px;font-size:12px;--c:#eef0f6;right:1047.60px;font-weight:bold;"><span class="la">30,000</span></div><div class="t" style="top:837.30px;font-size:12px;--c:#eef0f6;left:855.87px;transform:translateX(-50%);font-weight:bold;"><span class="la">6-12</span></div><div class="t" style="top:837.30px;font-size:12px;--c:#eef0f6;left:918.93px;transform:translateX(-50%);font-weight:bold;"><span class="la">6-14</span></div><div class="t" style="top:837.30px;font-size:12px;--c:#eef0f6;left:981.99px;transform:translateX(-50%);font-weight:bold;"><span class="la">6-16</span></div><div class="t" style="top:837.30px;font-size:12px;--c:#eef0f6;left:1045.04px;transform:translateX(-50%);font-weight:bold;"><span class="la">6-18</span></div><div class="t" style="top:837.30px;font-size:12px;--c:#eef0f6;left:1108.11px;transform:translateX(-50%);font-weight:bold;"><span class="la">6-20</span></div><div class="t" style="top:837.30px;font-size:12px;--c:#eef0f6;left:1171.16px;transform:translateX(-50%);font-weight:bold;"><span class="la">6-22</span></div><div class="t" style="top:837.30px;font-size:12px;--c:#eef0f6;left:1234.22px;transform:translateX(-50%);font-weight:bold;"><span class="la">6-24</span></div><div class="t" style="top:837.30px;font-size:12px;--c:#eef0f6;left:1297.28px;transform:translateX(-50%);font-weight:bold;"><span class="la">6-26</span></div><div class="t" style="top:837.30px;font-size:12px;--c:#eef0f6;left:1360.34px;transform:translateX(-50%);font-weight:bold;"><span class="la">6-28</span></div><div class="t" style="top:837.30px;font-size:12px;--c:#eef0f6;left:1423.40px;transform:translateX(-50%);font-weight:bold;"><span class="la">6-30</span></div><div class="t" style="top:837.30px;font-size:12px;--c:#eef0f6;left:1486.46px;transform:translateX(-50%);font-weight:bold;"><span class="la">7-2</span></div><div class="t" style="top:837.30px;font-size:12px;--c:#eef0f6;left:1549.53px;transform:translateX(-50%);font-weight:bold;"><span class="la">7-4</span></div><div class="t" style="top:837.30px;font-size:12px;--c:#eef0f6;left:1612.59px;transform:translateX(-50%);font-weight:bold;"><span class="la">7-6</span></div><div class="t" style="top:837.30px;font-size:12px;--c:#eef0f6;left:1675.64px;transform:translateX(-50%);font-weight:bold;"><span class="la">7-8</span></div><div class="t" style="top:837.30px;font-size:12px;--c:#eef0f6;left:1738.70px;transform:translateX(-50%);font-weight:bold;"><span class="la">7-10</span></div><div class="t" style="top:837.30px;font-size:12px;--c:#eef0f6;left:1801.76px;transform:translateX(-50%);font-weight:bold;"><span class="la">7-12</span></div><div class="t" style="top:866.60px;font-size:12px;--c:#eef0f6;left:1225.00px;font-weight:bold;"><span class="cj" style="width:4em">动力系列</span></div><div class="t" style="top:866.60px;font-size:12px;--c:#eef0f6;left:1313.00px;font-weight:bold;"><span class="cj" style="width:4em">测试使用</span></div><div class="t" style="top:866.60px;font-size:12px;--c:#eef0f6;left:1401.00px;font-weight:bold;"><span class="cj" style="width:2em">测试</span></div></div></div></body></html>
